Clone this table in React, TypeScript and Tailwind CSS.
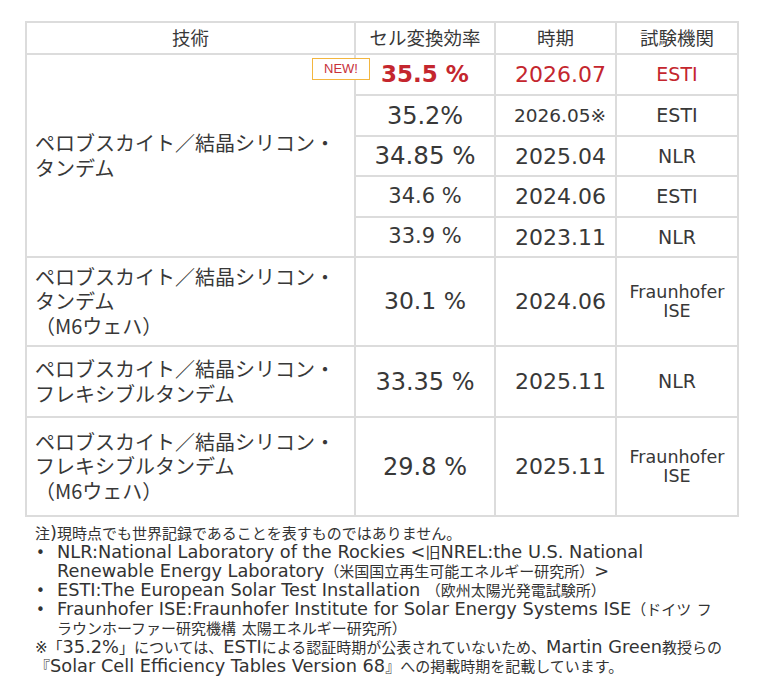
import React from "react";

const cell = "border-2 border-[#dcdcdc] text-[#383838]";
const red = "text-[#c4262e]";

type Row = {
  tech?: React.ReactNode;
  span?: number;
  eff: string;
  effSize: string;
  date: string;
  dateSize: string;
  lab: React.ReactNode;
  h: string;
  hot?: boolean;
};

const rows: Row[] = [
  {
    tech: (
      <>
        ペロブスカイト／結晶シリコン・
        <br />
        タンデム
      </>
    ),
    span: 5,
    eff: "35.5 %",
    effSize: "text-[23px]",
    date: "2026.07",
    dateSize: "text-[22px]",
    lab: "ESTI",
    h: "h-[41px]",
    hot: true,
  },
  { eff: "35.2%", effSize: "text-[24px]", date: "2026.05※", dateSize: "text-[18.5px]", lab: "ESTI", h: "h-[41px]" },
  { eff: "34.85 %", effSize: "text-[24.5px]", date: "2025.04", dateSize: "text-[22px]", lab: "NLR", h: "h-[40px]" },
  { eff: "34.6 %", effSize: "text-[21px]", date: "2024.06", dateSize: "text-[22px]", lab: "ESTI", h: "h-[41px]" },
  { eff: "33.9 %", effSize: "text-[21px]", date: "2023.11", dateSize: "text-[22px]", lab: "NLR", h: "h-[40px]" },
  {
    tech: (
      <>
        ペロブスカイト／結晶シリコン・
        <br />
        タンデム
        <br />
        （M6ウェハ）
      </>
    ),
    eff: "30.1 %",
    effSize: "text-[23.5px]",
    date: "2024.06",
    dateSize: "text-[22px]",
    lab: (
      <>
        Fraunhofer
        <br />
        ISE
      </>
    ),
    h: "h-[89px]",
  },
  {
    tech: (
      <>
        ペロブスカイト／結晶シリコン・
        <br />
        フレキシブルタンデム
      </>
    ),
    eff: "33.35 %",
    effSize: "text-[24px]",
    date: "2025.11",
    dateSize: "text-[22px]",
    lab: "NLR",
    h: "h-[71px]",
  },
  {
    tech: (
      <>
        ペロブスカイト／結晶シリコン・
        <br />
        フレキシブルタンデム
        <br />
        （M6ウェハ）
      </>
    ),
    eff: "29.8 %",
    effSize: "text-[24px]",
    date: "2025.11",
    dateSize: "text-[22px]",
    lab: (
      <>
        Fraunhofer
        <br />
        ISE
      </>
    ),
    h: "h-[99px]",
  },
];

// latin runs in the notes are set a bit larger than the japanese ones
function Mixed({ text }: { text: string }) {
  const parts = text.match(/[\x20-\x7e]+|[^\x20-\x7e]+/g) ?? [];
  return (
    <>
      {parts.map((p, i) =>
        /^[\x20-\x7e]/.test(p) ? (
          <span key={i} className="text-[17.75px] leading-[15px]">
            {p}
          </span>
        ) : (
          <span key={i}>{p}</span>
        )
      )}
    </>
  );
}

function Bullet({ lines }: { lines: string[] }) {
  return (
    <div className="flex">
      <span className="w-[22px] shrink-0 pl-[1px]">•</span>
      <span>
        {lines.map((l, i) => (
          <div key={i}>
            <Mixed text={l} />
          </div>
        ))}
      </span>
    </div>
  );
}

export default function App() {
  return (
    <div className="min-h-screen bg-white pt-[21px] px-[25px] font-['DejaVu_Sans','Noto_Sans_CJK_JP',sans-serif]">
      <table className="w-[712px] border-collapse table-fixed">
        <colgroup>
          <col className="w-[329px]" />
          <col className="w-[140px]" />
          <col className="w-[121px]" />
          <col className="w-[122px]" />
        </colgroup>
        <thead>
          <tr className="h-[32px] text-[18.5px] font-['Noto_Sans_CJK_JP',sans-serif]">
            <th className={`${cell} font-normal`}>技術</th>
            <th className={`${cell} font-normal`}>セル変換効率</th>
            <th className={`${cell} font-normal`}>時期</th>
            <th className={`${cell} font-normal`}>試験機関</th>
          </tr>
        </thead>
        <tbody>
          {rows.map((r, i) => (
            <tr key={i} className={r.h}>
              {r.tech && (
                <td
                  rowSpan={r.span ?? 1}
                  className={`${cell} pl-2 text-[20px] leading-[24.5px] align-middle font-['Noto_Sans_CJK_JP',sans-serif]`}
                >
                  {r.tech}
                </td>
              )}
              <td
                className={`${cell} relative text-center ${r.effSize} ${
                  r.hot ? `${red} font-bold` : ""
                }`}
              >
                {r.hot && (
                  <span className="absolute left-[-44px] top-[3px] z-10 flex h-[22px] w-[58px] items-center justify-center border-[1.5px] border-[#f3b63f] bg-white font-['Liberation_Sans',sans-serif] text-[13px] font-normal text-[#c8303a]">
                    NEW!
                  </span>
                )}
                {r.eff}
              </td>
              <td className={`${cell} text-right pr-[9px] ${r.dateSize} ${r.hot ? red : ""}`}>
                {r.date}
              </td>
              <td
                className={`${cell} text-center ${
                  typeof r.lab === "string" ? "text-[19px]" : "text-[17.5px] leading-[19px]"
                } ${r.hot ? red : ""}`}
              >
                {r.lab}
              </td>
            </tr>
          ))}
        </tbody>
      </table>

      <div className="mt-[8px] pl-[10px] text-[15px] leading-[19px] text-[#333] whitespace-nowrap">
        <div>
          <Mixed text="注)現時点でも世界記録であることを表すものではありません。" />
        </div>
        <Bullet
          lines={[
            "NLR:National Laboratory of the Rockies <旧NREL:the U.S. National",
            "Renewable Energy Laboratory（米国国立再生可能エネルギー研究所）>",
          ]}
        />
        <Bullet lines={["ESTI:The European Solar Test Installation （欧州太陽光発電試験所）"]} />
        <Bullet
          lines={[
            "Fraunhofer ISE:Fraunhofer Institute for Solar Energy Systems ISE（ドイツ フ",
            "ラウンホーファー研究機構 太陽エネルギー研究所）",
          ]}
        />
        <div>
          <Mixed text="※「35.2%」については、ESTIによる認証時期が公表されていないため、Martin Green教授らの" />
        </div>
        <div>
          <Mixed text="『Solar Cell Efficiency Tables Version 68』への掲載時期を記載しています。" />
        </div>
      </div>
    </div>
  );
}
